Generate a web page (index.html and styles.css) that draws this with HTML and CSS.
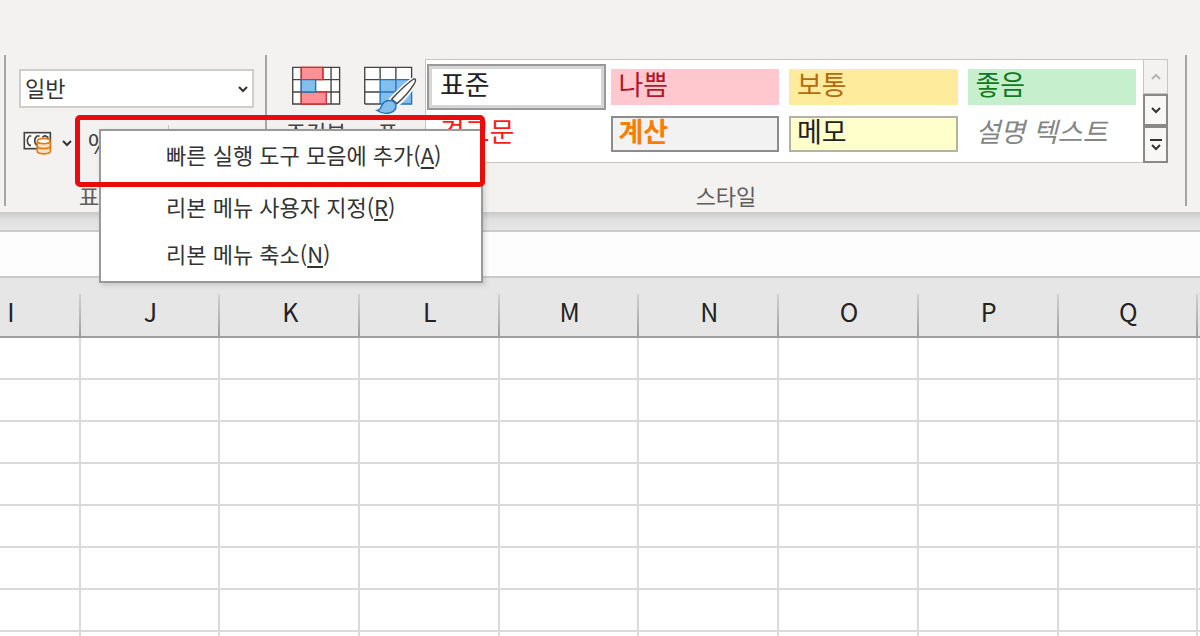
FILE: index.html
```html
<!DOCTYPE html>
<html lang="ko">
<head>
    <meta charset="UTF-8">
    <meta name="viewport" content="width=device-width, initial-scale=1.0">
    <title>Excel</title>
    <link rel="stylesheet" href="styles.css">
</head>
<body>
    <header class="ribbon">
        <section class="group number-group">
            <div class="format-box">
                <select class="format-select" aria-label="표시 형식">
                    <option>일반</option>
                </select>
                <svg class="chevron" viewBox="0 0 10 6"><path d="M1 1l4 4 4-4"/></svg>
            </div>
            <div class="number-tools">
                <button class="tool money" aria-label="회계 표시 형식">
                    <svg width="29" height="24" viewBox="0 0 87 72">
                        <rect x="4" y="5" width="78" height="48" fill="#fff" stroke="#444" stroke-width="5"/>
                        <path d="M25 15h-6q-6 6-6 14t6 14h5M50 15h-8q-7 6-7 14t7 14M58 18l8-4 8 4v6" fill="none" stroke="#444" stroke-width="5"/>
                        <path d="M43 31v30c0 10 39 10 39 0V31" fill="#fce3c8" stroke="#e27b16" stroke-width="5"/>
                        <ellipse cx="62" cy="30" rx="19" ry="8" fill="#fff" stroke="#e27b16" stroke-width="5"/>
                        <path d="M43 46c0 9 39 9 39 0" fill="none" stroke="#e27b16" stroke-width="5"/>
                    </svg>
                    <svg class="chevron" viewBox="0 0 10 6"><path d="M1 1l4 4 4-4"/></svg>
                </button>
                <button class="tool percent">%</button>
                <span class="tool-line"></span>
                <button class="tool" aria-label="자릿수 늘림">
                    <svg width="28" height="26" viewBox="0 0 28 26" fill="none" stroke="#444" stroke-width="2">
                        <ellipse cx="9" cy="6" rx="4" ry="5"/><path d="M28 6H18M22 2l-4 4 4 4"/>
                        <ellipse cx="11" cy="20" rx="3" ry="5"/><ellipse cx="21" cy="20" rx="3" ry="5"/>
                    </svg>
                </button>
                <button class="tool" aria-label="자릿수 줄임">
                    <svg width="28" height="26" viewBox="0 0 28 26" fill="none" stroke="#444" stroke-width="2">
                        <ellipse cx="8" cy="6" rx="3" ry="5"/><ellipse cx="18" cy="6" rx="3" ry="5"/>
                        <ellipse cx="21" cy="20" rx="3" ry="5"/><path d="M2 20h11M9 16l4 4-4 4"/>
                    </svg>
                </button>
            </div>
            <div class="group-label">표시 형식</div>
        </section>

        <section class="group style-group">
            <div class="style-tools">
                <button class="big-button">
                    <svg class="big-icon" viewBox="0 0 144 114">
                        <rect x="4" y="4" width="137" height="107" fill="#fff"/>
                        <path d="M4 4h137v107H4zM4 40h137M4 76h137M29 4v107M116 4v107M92 4v36" fill="none" stroke="#444" stroke-width="4"/>
                        <path d="M29 4h63v36H29zM29 76h73v35H29z" fill="#ff9095" stroke="#d92b30" stroke-width="4"/>
                        <path d="M29 40h42v36H29z" fill="#83beec" stroke="#1e74bd" stroke-width="4"/>
                    </svg>
                    <span>조건부<br>서식</span>
                </button>
                <button class="big-button">
                    <svg class="big-icon" viewBox="0 0 144 114">
                        <rect x="4" y="4" width="137" height="107" fill="#fff"/>
                        <path d="M49 40h92v71H49z" fill="#83beec"/>
                        <path d="M4 111V4h137v36M4 40h45M4 76h45M49 4v36M95 4v36M4 111h45" fill="none" stroke="#444" stroke-width="4"/>
                        <path d="M49 40h92v71H49zM49 76h92M95 40v71" fill="none" stroke="#1e74bd" stroke-width="4"/>
                        <path d="M147 38c9-3 6 10 1 17-14 23-31 42-49 58L81 97c19-20 42-44 66-59z" fill="#fff" stroke="#f3f2f1" stroke-width="12"/>
                        <path d="M147 38c8-3 6 8 1 15-14 22-32 42-50 57L83 97c19-20 41-44 64-59z" fill="#fff" stroke="#444" stroke-width="4"/>
                        <path d="M40 130c12-1 10-8 15-17 9-17 36-16 40 1 4 23-31 32-55 16z" fill="#83beec" stroke="#1e74bd" stroke-width="4"/>
                    </svg>
                    <span>표<br>서식</span>
                </button>
                <div class="gallery">
                    <div class="gallery-items">
                        <button class="cell-style selected">표준</button>
                        <button class="cell-style bad">나쁨</button>
                        <button class="cell-style neutral">보통</button>
                        <button class="cell-style good">좋음</button>
                        <button class="cell-style warning">경고문</button>
                        <button class="cell-style calc">계산</button>
                        <button class="cell-style note">메모</button>
                        <button class="cell-style explain">설명 텍스트</button>
                    </div>
                    <div class="gallery-scroll">
                        <button class="scroll-button" disabled aria-label="위로">
                            <svg class="chevron" viewBox="0 0 10 6"><path d="M1 5l4-4 4 4"/></svg>
                        </button>
                        <button class="scroll-button" aria-label="아래로">
                            <svg class="chevron" viewBox="0 0 10 6"><path d="M1 1l4 4 4-4"/></svg>
                        </button>
                        <button class="scroll-button" aria-label="자세히">
                            <svg class="more" viewBox="0 0 12 12"><path d="M0 1h12M2 6l4 4 4-4"/></svg>
                        </button>
                    </div>
                </div>
            </div>
            <div class="group-label">스타일</div>
        </section>
    </header>

    <div class="ribbon-shadow"></div>
    <div class="formula-bar"></div>

    <main class="sheet">
        <table class="grid">
            <thead>
                <tr><th>I</th><th>J</th><th>K</th><th>L</th><th>M</th><th>N</th><th>O</th><th>P</th><th>Q</th><th></th></tr>
            </thead>
            <tbody>
                <tr><td></td><td></td><td></td><td></td><td></td><td></td><td></td><td></td><td></td><td></td></tr>
                <tr><td></td><td></td><td></td><td></td><td></td><td></td><td></td><td></td><td></td><td></td></tr>
                <tr><td></td><td></td><td></td><td></td><td></td><td></td><td></td><td></td><td></td><td></td></tr>
                <tr><td></td><td></td><td></td><td></td><td></td><td></td><td></td><td></td><td></td><td></td></tr>
                <tr><td></td><td></td><td></td><td></td><td></td><td></td><td></td><td></td><td></td><td></td></tr>
                <tr><td></td><td></td><td></td><td></td><td></td><td></td><td></td><td></td><td></td><td></td></tr>
                <tr><td></td><td></td><td></td><td></td><td></td><td></td><td></td><td></td><td></td><td></td></tr>
                <tr><td></td><td></td><td></td><td></td><td></td><td></td><td></td><td></td><td></td><td></td></tr>
            </tbody>
        </table>
    </main>

    <!-- Right-click menu -->
    <div class="context-menu" role="menu">
        <button class="menu-item" role="menuitem">빠른 실행 도구 모음에 추가(<u>A</u>)</button>
        <hr class="menu-line">
        <button class="menu-item" role="menuitem">리본 메뉴 사용자 지정(<u>R</u>)</button>
        <button class="menu-item" role="menuitem">리본 메뉴 축소(<u>N</u>)</button>
    </div>
    <div class="highlight"></div>
</body>
</html>
```

FILE: styles.css
```css
* {
    box-sizing: border-box;
}
body {
    margin: 0;
    height: 100vh;
    overflow: hidden;
    position: relative;
    display: flex;
    flex-direction: column;
    background-color: #fff;
    color: #444;
    font-family: "Noto Sans CJK KR", sans-serif;
    font-size: 22px;
}
button, select {
    font: inherit;
    color: inherit;
    border: none;
    background: none;
    padding: 0;
    margin: 0;
}
svg {
    display: block;
    flex: none;
    overflow: visible;
}
.chevron {
    width: 10px;
    height: 6px;
    fill: none;
    stroke: #333;
    stroke-width: 2;
}

/* Ribbon */
.ribbon {
    display: flex;
    flex: none;
    padding: 55px 13px 6px 4px;
    background-color: #f3f2f1;
}
.group {
    display: flex;
    flex-direction: column;
    border-right: 2px solid #a6a6a6;
}
.number-group {
    width: 263px;
    padding: 14px 11px 0 13px;
    border-left: 2px solid #a6a6a6;
}
.group-label {
    margin-top: auto;
    padding-bottom: 2px;
    line-height: 18px;
    text-align: center;
    color: #605e5c;
}
.number-group .group-label {
    padding-right: 28px;
}
.format-box {
    display: grid;
    align-items: center;
}
.format-box > * {
    grid-area: 1 / 1;
}
.format-box .chevron {
    justify-self: end;
    margin-right: 6px;
    pointer-events: none;
}
.format-select {
    appearance: none;
    width: 100%;
    height: 39px;
    padding: 0 0 6px 4px;
    border: 2px solid #cfcdcb;
    background-color: #fff;
    color: #333;
}
.number-tools {
    display: flex;
    align-items: center;
    height: 40px;
    margin-top: 15px;
    padding-left: 4px;
}
.tool {
    flex: none;
    display: flex;
    align-items: center;
    gap: 10px;
    margin-right: 8px;
}
.money {
    margin-right: 16px;
}
.percent {
    width: 72px;
    font-size: 27px;
    line-height: 36px;
}
.tool-line {
    flex: none;
    width: 1px;
    height: 36px;
    margin-right: 24px;
    background-color: #c8c6c4;
}

/* Styles group */
.style-group {
    flex: 1;
    padding-top: 4px;
}
.style-tools {
    display: flex;
    height: 104px;
    margin-bottom: 23px;
    padding: 0 17px 0 19px;
}
.big-button {
    flex: none;
    display: flex;
    flex-direction: column;
    align-items: center;
    width: 60px;
    margin-right: 12px;
    padding-top: 7px;
    line-height: 26px;
    white-space: nowrap;
}
.big-button + .gallery {
    margin-left: -5px;
}
.big-icon {
    width: 50px;
    height: 39px;
    margin-bottom: 13px;
}
.gallery {
    flex: 1;
    display: flex;
    background-color: #fff;
}
.gallery-items {
    flex: 1;
    display: grid;
    grid-template-columns: repeat(4, 1fr);
    grid-template-rows: 36px 36px;
    gap: 11px 10px;
    padding: 9px 7px 9px 6px;
    border: 1px solid #c8c6c4;
    border-right: none;
}
.cell-style {
    padding-left: 8px;
    font-size: 27px;
    line-height: 30px;
    text-align: left;
    display: flex;
    align-items: flex-start;
    white-space: nowrap;
}
.selected {
    color: #222;
    box-shadow: 0 0 0 3px #d6d6d6, 0 0 0 5px #999;
}
.bad {
    background-color: #ffc7ce;
    color: #b0182b;
}
.neutral {
    background-color: #ffeb9c;
    color: #b36b12;
}
.good {
    background-color: #c6efce;
    color: #127a1c;
}
.warning {
    color: #f51e1e;
}
.calc {
    border: 2px solid #8c8c8c;
    background-color: #f2f2f2;
    color: #fa7d00;
    font-weight: bold;
}
.note {
    border: 2px solid #b2b2a8;
    background-color: #ffffcc;
    color: #222;
}
.calc, .note {
    padding-left: 6px;
    line-height: 26px;
}
.explain {
    color: #858585;
    font-style: italic;
}
.gallery-scroll {
    display: grid;
    grid-template-rows: 35px 32px 37px;
    width: 25px;
}
.scroll-button {
    display: flex;
    align-items: center;
    justify-content: center;
    border: 2px solid #8a8886;
    background-color: #f8f7f6;
}
.scroll-button:disabled {
    border: 1px solid #c8c6c4;
    background-color: #f3f2f1;
}
.scroll-button:disabled .chevron {
    stroke: #b5b3b1;
}
.more {
    width: 12px;
    height: 12px;
    fill: none;
    stroke: #333;
    stroke-width: 2;
}

/* Formula bar */
.ribbon-shadow {
    flex: none;
    height: 18px;
    background: linear-gradient(#cacaca, #e1e1e1 8px, #e6e6e6);
}
.formula-bar {
    flex: none;
    height: 48px;
    border-top: 2px solid #cbcbcb;
    border-bottom: 2px solid #cbcbcb;
    background-color: #fdfdfd;
}

/* Sheet, scrolled a little into column I */
.sheet {
    flex: 1;
    overflow: hidden;
}
.grid {
    width: 1397px;
    margin-left: -59px;
    table-layout: fixed;
    border-collapse: separate;
    border-spacing: 0;
}
.grid th {
    height: 60px;
    padding: 8px 0 0;
    border-bottom: 2px solid #9e9e9e;
    background: linear-gradient(#d0d0d0, #a0a0a0) right bottom / 2px 42px no-repeat #e6e6e6;
    color: #222;
    font-size: 25px;
    font-weight: normal;
}
.grid td {
    height: 42px;
    padding: 0;
    border-right: 2px solid #dadada;
    border-bottom: 2px solid #dadada;
}

/* Context menu */
.context-menu {
    position: absolute;
    left: 99px;
    top: 129px;
    width: 384px;
    padding-bottom: 4px;
    border: 2px solid #999;
    background-color: #fff;
    box-shadow: 2px 2px 5px rgba(0, 0, 0, 0.15);
}
.menu-item {
    display: block;
    width: 100%;
    padding-left: 65px;
    line-height: 47px;
    text-align: left;
    color: #333;
    white-space: nowrap;
}
.menu-item u {
    text-decoration-thickness: 2px;
    text-underline-offset: 3px;
}
.menu-line {
    height: 1px;
    margin: 4px 0 0 56px;
    border: none;
    background-color: #e1e1e1;
}
.highlight {
    position: absolute;
    left: 75px;
    top: 115px;
    width: 410px;
    height: 72px;
    border: 5px solid #e80c0c;
    border-radius: 5px;
    pointer-events: none;
}
```
